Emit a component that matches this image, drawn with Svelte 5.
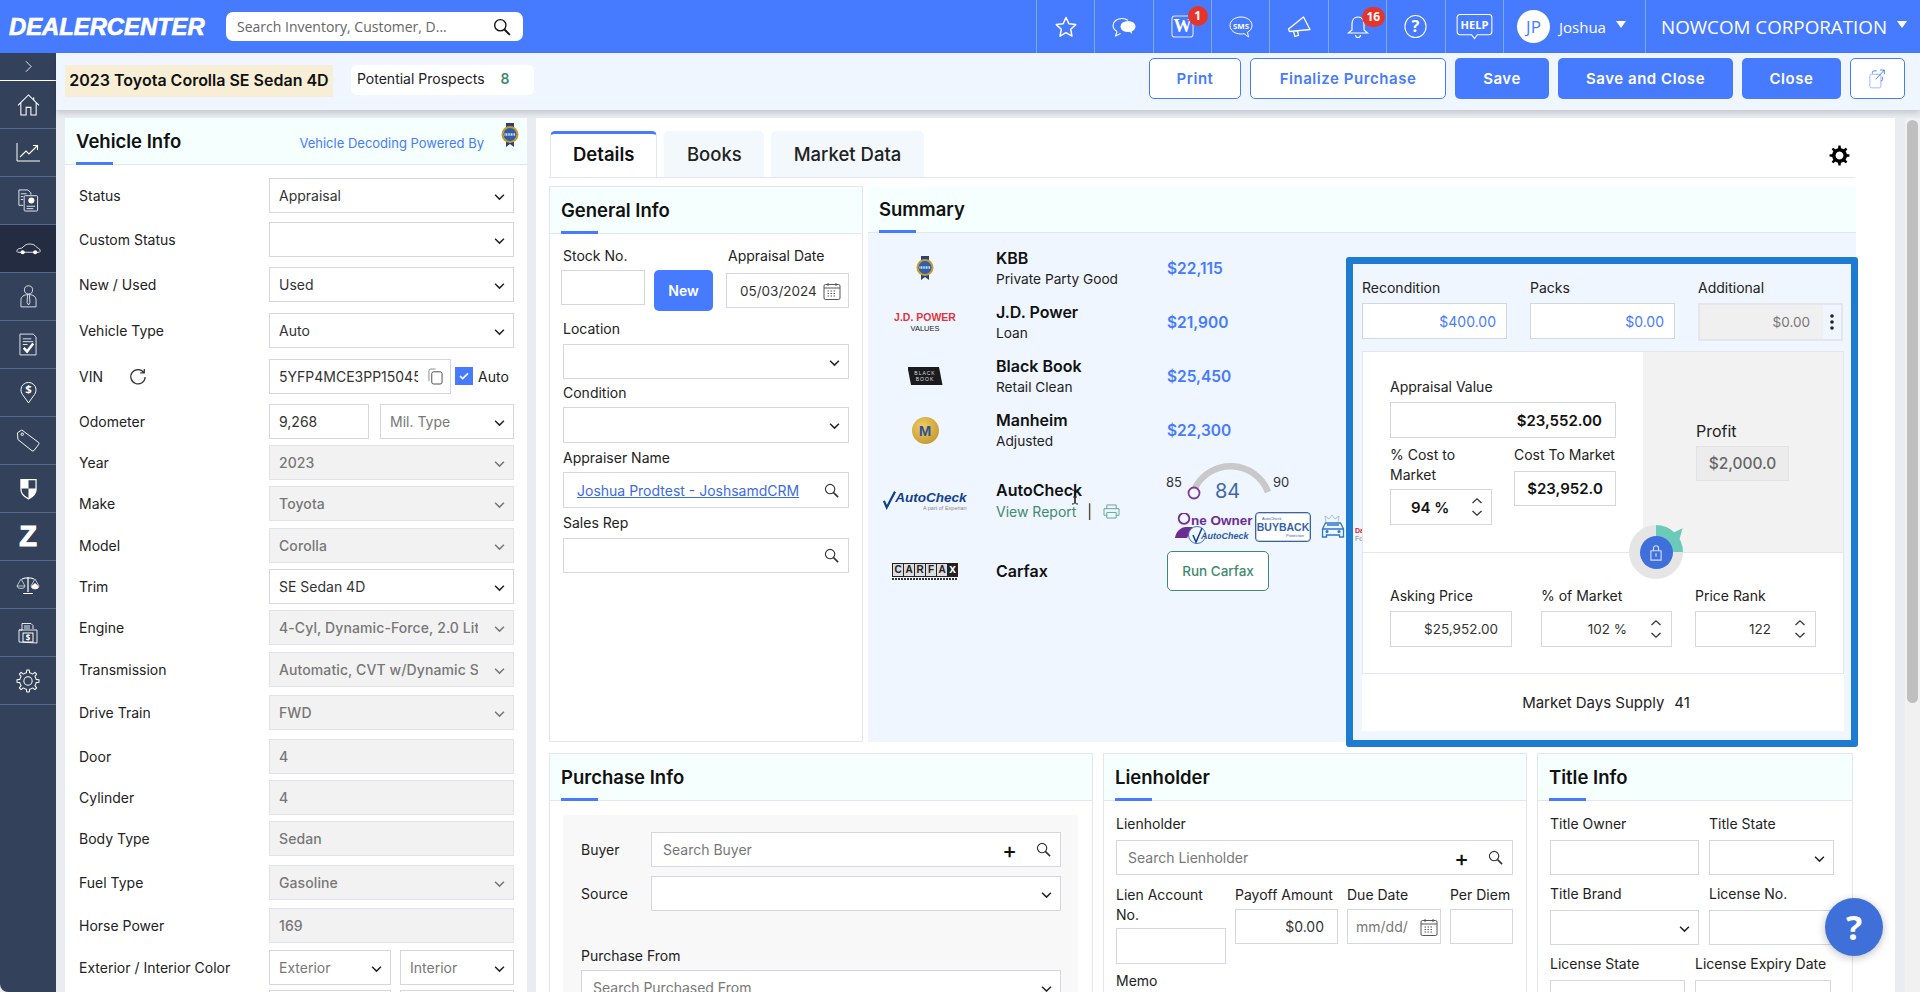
<script>
  // row pitch comes from the page itself, the rows are not evenly spaced
  const rows = [
    { label: 'Status', value: 'Appraisal', type: 'sel', pitch: 44 },
    { label: 'Custom Status', value: '', type: 'sel', pitch: 45 },
    { label: 'New / Used', value: 'Used', type: 'sel', pitch: 46 },
    { label: 'Vehicle Type', value: 'Auto', type: 'sel', pitch: 46 },
    { label: 'VIN', type: 'vin', pitch: 45 },
    { label: 'Odometer', type: 'odo', pitch: 41 },
    { label: 'Year', value: '2023', type: 'dsel', pitch: 41 },
    { label: 'Make', value: 'Toyota', type: 'dsel', pitch: 42 },
    { label: 'Model', value: 'Corolla', type: 'dsel', pitch: 41 },
    { label: 'Trim', value: 'SE Sedan 4D', type: 'sel', pitch: 41 },
    { label: 'Engine', value: '4-Cyl, Dynamic-Force, 2.0 Liter', type: 'dsel', pitch: 42 },
    { label: 'Transmission', value: 'Automatic, CVT w/Dynamic Shift', type: 'dsel', pitch: 43 },
    { label: 'Drive Train', value: 'FWD', type: 'dsel', pitch: 44 },
    { label: 'Door', value: '4', type: 'dis', pitch: 41 },
    { label: 'Cylinder', value: '4', type: 'dis', pitch: 41 },
    { label: 'Body Type', value: 'Sedan', type: 'dis', pitch: 44 },
    { label: 'Fuel Type', value: 'Gasoline', type: 'dsel', pitch: 43 },
    { label: 'Horse Power', value: '169', type: 'dis', pitch: 42 },
    { label: 'Exterior / Interior Color', type: 'color', pitch: 40 },
    { label: '', type: 'color2', pitch: 40 }
  ];

  const providers = [
    { name: 'KBB', sub: 'Private Party Good', price: '$22,115' },
    { name: 'J.D. Power', sub: 'Loan', price: '$21,900' },
    { name: 'Black Book', sub: 'Retail Clean', price: '$25,450' },
    { name: 'Manheim', sub: 'Adjusted', price: '$22,300' }
  ];

  function gearPath(cx, cy, r1, r2, teeth) {
    let d = '';
    const step = (Math.PI * 2) / teeth;
    for (let i = 0; i < teeth; i++) {
      const a = i * step;
      const pts = [
        [r1, a - step * 0.5],
        [r1, a - step * 0.25],
        [r2, a - step * 0.14],
        [r2, a + step * 0.14],
        [r1, a + step * 0.25]
      ];
      for (const [r, t] of pts) {
        d += (d ? 'L' : 'M') + (cx + r * Math.cos(t)).toFixed(2) + ' ' + (cy + r * Math.sin(t)).toFixed(2);
      }
    }
    return d + 'Z';
  }
</script>

{#snippet chev(muted)}
  <svg class="chev" class:muted viewBox="0 0 12 8" width="11" height="8"><path d="M1.2 1.5 6 6.3l4.8-4.8" fill="none" stroke="currentColor" stroke-width="1.6" /></svg>
{/snippet}

{#snippet search(size = 15)}
  <svg class="sicon" viewBox="0 0 16 16" width={size} height={size}><circle cx="6.5" cy="6.5" r="5" fill="none" stroke="currentColor" stroke-width="1.2" /><path d="M10.2 10.2 15 15" stroke="currentColor" stroke-width="1.7" /></svg>
{/snippet}

{#snippet calendar()}
  <svg class="cal" viewBox="0 0 18 18" width="18" height="18"><rect x="1" y="2.5" width="16" height="15" rx="1.5" fill="none" stroke="#555" /><path d="M1 6h16M5 1v3M13 1v3" stroke="#555" /><path d="M4.5 9h9M4.5 11.5h9M4.5 14h9" stroke="#555" stroke-dasharray="1.5 1.5" /></svg>
{/snippet}

{#snippet spin()}
  <svg class="spin" viewBox="0 0 12 20" width="12" height="20"><path d="M1.5 6 6 1.8 10.500 6M1.500 14 6 18.200 10.500 14" fill="none" stroke="#333" stroke-width="1.300" /></svg>
{/snippet}

{#snippet kbb(w, h)}
  <svg viewBox="0 0 18 24" width={w} height={h}><path d="M5 0h8v24l-4-3-4 3z" fill="#2b3f78" /><circle cx="9" cy="11.500" r="8.500" fill="#c99a2e" /><circle cx="9" cy="11.500" r="6.500" fill="#2f5fa8" /><path d="M3.500 11.500h11" stroke="#dfe8f4" stroke-width="2.500" stroke-dasharray="1 .6" /></svg>
{/snippet}

<div class="app">
  <header class="topbar">
    <div class="logo">DEALERCENTER</div>
    <div class="gsearch"><span>Search Inventory, Customer, D...</span>{@render search(18)}</div>
    <nav class="tools">
      <div class="tool"><svg viewBox="0 0 24 24" width="24" height="24"><path d="m12 2.500 2.900 6.300 6.800.8-5 4.700 1.300 6.800-6-3.400-6 3.400 1.300-6.800-5-4.700 6.800-.8z" fill="none" stroke="#fff" stroke-width="1.500" stroke-linejoin="round" /></svg></div>
      <div class="tool"><svg viewBox="0 0 24 20" width="24" height="20"><path d="M5 14.500C2.500 13 1 11 1 8.500 1 4.500 5 1.500 10 1.500c2.500 0 4.500.6 6 1.700M5 14.500 3.500 19l5-2.500" fill="none" stroke="#fff" stroke-width="1.100" stroke-linejoin="round" /><ellipse cx="16" cy="9.500" rx="7.500" ry="5.500" fill="#fff" /><path d="m17 14 3 3-.5-4z" fill="#fff" /></svg></div>
      <div class="tool"><svg viewBox="0 0 24 24" width="23" height="23"><rect x="1" y="1" width="22" height="22" rx="3" fill="none" stroke="#dfe9ff" stroke-width="1.100" /><text x="12" y="18" text-anchor="middle" class="wtxt">W</text></svg><b class="badge b1">1</b></div>
      <div class="tool"><svg viewBox="0 0 24 22" width="24" height="22"><path d="M12 1C6 1 1 4.500 1 9.500S6 18 12 18c1 0 2-.1 3-.4l4.500 3.400-1-4.800c3-1.500 4.500-4 4.500-6.700C23 4.500 18 1 12 1z" fill="none" stroke="#fff" stroke-width="1" /><text x="12" y="12.500" text-anchor="middle" class="smstxt">SMS</text></svg></div>
      <div class="tool"><svg viewBox="0 0 24 22" width="24" height="22"><path d="M16.500 1 1.500 13l1 2.500L23 13.500zM6.500 15.500l1.500 5 3.500-1.200-1-4.300" fill="none" stroke="#fff" stroke-width="1.300" stroke-linejoin="round" /></svg></div>
      <div class="tool"><svg viewBox="0 0 24 26" width="24" height="26"><path d="M12 3c-4 0-6 3-6 7v6l-3.500 3h19L18 16v-6c0-4-2-7-6-7zM9.500 21a2.500 2.500 0 0 0 5 0" fill="none" stroke="#fff" stroke-width="1.200" /></svg><b class="badge b2">16</b></div>
      <div class="tool"><svg viewBox="0 0 26 26" width="25" height="25"><ellipse cx="13" cy="13" rx="11" ry="11.500" fill="none" stroke="#fff" stroke-width="1.100" /><text x="13" y="19" text-anchor="middle" class="qtxt">?</text></svg></div>
      <div class="tool"><svg viewBox="0 0 38 28" width="37" height="27"><path d="M4 1.500h30a3 3 0 0 1 3 3v15a3 3 0 0 1-3 3H22l-3 4-3-4H4a3 3 0 0 1-3-3v-15a3 3 0 0 1 3-3z" fill="none" stroke="#fff" stroke-width="1.100" /><text x="19" y="16.500" text-anchor="middle" class="helptxt">HELP</text></svg></div>
      <div class="tool user"><span class="avatar">JP</span><span class="uname">Joshua</span><i class="caret"></i></div>
      <div class="tool org"><span>NOWCOM CORPORATION</span><i class="caret"></i></div>
    </nav>
  </header>

  <div class="body">
    <aside class="side">
      <div class="side-toggle"><svg viewBox="0 0 8 14" width="7" height="13"><path d="m1 1 6 6-6 6" fill="none" stroke="#fff" /></svg></div>
      <div class="side-item"><svg viewBox="0 0 24 23" width="23" height="22"><path d="M1 12 12 1l11 11M4 9.500V22h5.500v-8h5v8H20V9.500M17.500 3.500V6" fill="none" stroke="#fff" stroke-width="1.100" /></svg></div>
      <div class="side-item"><svg viewBox="0 0 24 19" width="24" height="19"><path d="M1 0v18h23" fill="none" stroke="#fff" stroke-width="1" /><path d="m4 14 6-6 3 3 8-8m-4-.5h4.500V7" fill="none" stroke="#fff" stroke-width="1.100" /></svg></div>
      <div class="side-item"><svg viewBox="0 0 22 24" width="22" height="23"><path d="M6 17H1.500V1h9.500l3 3v2" fill="none" stroke="#e6eaf0" /><rect x="7" y="7" width="14" height="16" rx="1" fill="none" stroke="#e6eaf0" /><circle cx="14.500" cy="12" r="3.200" fill="#fff" /><path d="M9.500 18h9M9.500 20.500h7M3.500 5h6M3.500 8h2.500M3.500 11h2.500" stroke="#e6eaf0" /></svg></div>
      <div class="side-item active"><svg viewBox="0 0 30 15" width="25" height="13"><path d="M1 11c0-3 2.500-3.500 6-4l4-3.500c3-2 9-2 12 .5l3 3c2 .5 3 1.500 3 4l-1 1H2z" fill="none" stroke="#fff" stroke-width="1" /><circle cx="8" cy="12" r="2.500" fill="#fff" /><circle cx="23" cy="12" r="2.500" fill="#fff" /></svg></div>
      <div class="side-item"><svg viewBox="0 0 18 24" width="17" height="23"><circle cx="9" cy="5" r="4.300" fill="none" stroke="#dde2ea" stroke-width="1" /><path d="M1 23v-7c0-4 3-6 8-6s8 2 8 6v7zM8 10.500l-.500 8L9 21l1.500-2.500-.5-8" fill="none" stroke="#dde2ea" stroke-width="1" /></svg></div>
      <div class="side-item"><svg viewBox="0 0 19 24" width="18" height="23"><path d="M1 1h14l3 3v19H1zM4 6h9M4 9h11M4 12h5" fill="none" stroke="#e6eaf0" stroke-width="1" /><path d="m5 15.500 3.500 4L15 11" fill="none" stroke="#fff" stroke-width="2.600" /></svg></div>
      <div class="side-item"><svg viewBox="0 0 18 24" width="17" height="23"><path d="M9 23 2.500 14a8 8 0 1 1 13 0z" fill="none" stroke="#fff" stroke-width="1" /><text x="9" y="12.500" text-anchor="middle" class="dollar">$</text></svg></div>
      <div class="side-item"><svg viewBox="0 0 25 24" width="24" height="23"><path d="M1.500 4 6 1 23.500 14a1.500 1.500 0 0 1 .2 2l-5 6.500a1.500 1.500 0 0 1-2 .2L2 11z" fill="none" stroke="#fff" stroke-width="1" /><circle cx="6.500" cy="5.500" r="1.300" fill="none" stroke="#fff" /></svg></div>
      <div class="side-item"><svg viewBox="0 0 18 23" width="17" height="22"><path d="M1 1.500h16v10.500c0 4.500-4 8-8 10-4-2-8-5.500-8-10z" fill="none" stroke="#fff" stroke-width="1.300" /><path d="M1 1.500h8v9.500H1zM9 11h8v1c0 4.500-4 8-8 10z" fill="#fff" /></svg></div>
      <div class="side-item"><span class="zed">Z</span></div>
      <div class="side-item"><svg viewBox="0 0 24 20" width="24" height="20"><path d="M12 2v15M7 18.500h10M6 4l3-1h6l3 1" fill="none" stroke="#fff" stroke-width="1.200" /><path d="M5 4 1 11h8zM1 11a4 2.500 0 0 0 8 0" fill="none" stroke="#dde2ea" stroke-width=".8" /><path d="M19 4l-4 7a4 3 0 0 0 8 0z" fill="none" stroke="#dde2ea" stroke-width=".8" /><path d="M15.500 11 19 8l3.500 3a3.500 3 0 0 1-7 0z" fill="#fff" /></svg></div>
      <div class="side-item"><svg viewBox="0 0 20 22" width="20" height="22"><path d="M4 8V1.500h9l2 2V7" fill="none" stroke="#e6eaf0" /><path d="M1 8v12l18 1V8zM1 8l3 0" fill="none" stroke="#e6eaf0" /><path d="M6 4h6M6 6h6" stroke="#e6eaf0" /><rect x="5" y="11" width="10" height="9" fill="none" stroke="#fff" /><text x="10" y="18.500" text-anchor="middle" class="dollar2">$</text></svg></div>
      <div class="side-item"><svg viewBox="0 0 26 26" width="24" height="24"><path d={gearPath(13, 13, 9, 12, 8)} fill="none" stroke="#fff" stroke-width="1.100" stroke-linejoin="round" /><circle cx="13" cy="13" r="4.500" fill="none" stroke="#fff" stroke-width="1.100" /></svg></div>
    </aside>

    <main class="main">
      <div class="subbar">
        <div class="vehicle-name">2023 Toyota Corolla SE Sedan 4D</div>
        <div class="prospects">Potential Prospects <b>8</b></div>
        <div class="actions">
          <button class="btn line w-print">Print</button>
          <button class="btn line w-final">Finalize Purchase</button>
          <button class="btn fill w-save">Save</button>
          <button class="btn fill w-saveclose">Save and Close</button>
          <button class="btn fill w-close">Close</button>
          <button class="btn line w-ext" aria-label="Open"><svg viewBox="0 0 20 24" width="17" height="21"><rect x="1" y="7" width="13" height="16" rx="2" fill="none" stroke="#8fadff" /><path d="M4 6V5a2 2 0 0 1 2-2h3M16 10v3a2 2 0 0 1-2 2M8 13 18 2m-5 0h5v5" fill="none" stroke="#477bff" stroke-width="1.100" /></svg></button>
        </div>
      </div>

      <div class="content">
        <section class="vehicle">
          <div class="panel-head tall">
            <h3>Vehicle Info</h3>
            <span class="decoding">Vehicle Decoding Powered By</span>
            <span class="head-kbb">{@render kbb(18, 24)}</span>
          </div>
          <div class="vehicle-rows">
            {#each rows as row}
              <div class="vrow" style="height:{row.pitch}px">
                <div class="vlabel">
                  {row.label}
                  {#if row.type === 'vin'}
                    <svg class="refresh" viewBox="0 0 20 20" width="18" height="18"><path d="M16.500 5A8 8 0 1 0 18 10M17 1v4.500h-4.500" fill="none" stroke="#333" stroke-width="1.400" /></svg>
                  {/if}
                </div>
                {#if row.type === 'sel'}
                  <div class="box grow"><span class="clip">{row.value}</span>{@render chev(false)}</div>
                {:else if row.type === 'dsel'}
                  <div class="box grow dis"><span class="clip">{row.value}</span>{@render chev(true)}</div>
                {:else if row.type === 'dis'}
                  <div class="box grow dis"><span class="clip">{row.value}</span></div>
                {:else if row.type === 'vin'}
                  <div class="box vin"><span class="clip">5YFP4MCE3PP150458</span><svg class="copy" viewBox="0 0 16 18" width="15" height="17"><rect x="4" y="4" width="11" height="13" rx="2" fill="none" stroke="#444" /><path d="M1 14V3a2 2 0 0 1 2-2h5" fill="none" stroke="#888" /></svg></div>
                  <span class="check"><svg viewBox="0 0 18 18" width="12" height="12"><path d="m3 9 4 4 8-8" fill="none" stroke="#fff" stroke-width="2.400" /></svg></span>
                  <span class="auto">Auto</span>
                {:else if row.type === 'odo'}
                  <div class="box odo">9,268</div>
                  <div class="box miltype"><span class="ph">Mil. Type</span>{@render chev(false)}</div>
                {:else if row.type === 'color'}
                  <div class="box ext"><span class="ph">Exterior</span>{@render chev(false)}</div>
                  <div class="box int"><span class="ph">Interior</span>{@render chev(false)}</div>
                {:else}
                  <div class="box ext"></div>
                  <div class="box int"></div>
                {/if}
              </div>
            {/each}
          </div>
        </section>

        <section class="work">
          <div class="tabs">
            <div class="tab on">Details</div>
            <div class="tab">Books</div>
            <div class="tab">Market Data</div>
            <svg class="gear" viewBox="0 0 24 24" width="21" height="21"><path fill-rule="evenodd" d={gearPath(12, 12, 8.500, 11.500, 8) + 'M12 7.500a4.500 4.500 0 1 0 .01 0z'} fill="#000" /></svg>
          </div>

          <div class="top-row">
            <section class="panel general">
              <div class="panel-head"><h3>General Info</h3></div>
              <div class="general-body">
                <div class="stock-row">
                  <div class="stock">
                    <label for="stockno">Stock No.</label>
                    <div id="stockno" class="box"></div>
                  </div>
                  <button class="new-btn">New</button>
                  <div class="appraisal-date">
                    <span class="lbl">Appraisal Date</span>
                    <div class="box"><span>05/03/2024</span>{@render calendar()}</div>
                  </div>
                </div>
                <span class="lbl loc">Location</span>
                <div class="box gen">{@render chev(false)}</div>
                <span class="lbl">Condition</span>
                <div class="box gen tall">{@render chev(false)}</div>
                <span class="lbl">Appraiser Name</span>
                <div class="box gen tall"><a href="#appraiser" class="link">Joshua Prodtest - JoshsamdCRM</a>{@render search(15)}</div>
                <span class="lbl">Sales Rep</span>
                <div class="box gen">{@render search(15)}</div>
              </div>
            </section>

            <section class="panel summary">
              <div class="panel-head"><h3>Summary</h3></div>
              <div class="summary-body">
                <div class="providers">
                  {#each providers as p, i}
                    <div class="prow">
                      <div class="plogo">
                        {#if i === 0}
                          {@render kbb(18, 24)}
                        {:else if i === 1}
                          <div class="jd"><b>J.D. POWER</b><span>VALUES</span></div>
                        {:else if i === 2}
                          <div class="bb"><span>BLACK<br />BOOK</span></div>
                        {:else}
                          <div class="manheim"><span>M</span></div>
                        {/if}
                      </div>
                      <div class="pname"><strong>{p.name}</strong><span>{p.sub}</span></div>
                      <div class="pprice">{p.price}</div>
                    </div>
                  {/each}
                  <div class="prow autocheck">
                    <div class="plogo"><div class="ac-logo"><svg viewBox="0 0 14 20" width="13" height="20"><path d="M1 11l3 7L13 1" fill="none" stroke="#123f8c" stroke-width="2.400" /></svg><div><b>AutoCheck</b><span>A part of Experian</span></div></div></div>
                    <div class="pname">
                      <strong>AutoCheck</strong>
                      <span class="report">View Report <i>|</i><svg viewBox="0 0 18 16" width="17" height="15"><path d="M4 5V1h10v4M4 12H1V5h16v7h-3M4 9h10v6H4z" fill="none" stroke="#5fa58e" /></svg></span>
                      <svg class="ibeam" viewBox="0 0 8 16" width="8" height="16"><path d="M1 1c2 0 3 .5 3 2v10c0 1.500-1 2-3 2M7 1c-2 0-3 .5-3 2v10c0 1.500 1 2 3 2M2 8h4" fill="none" stroke="#111" stroke-width="1" /></svg>
                    </div>
                    <div class="badges">
                      <div class="gauge">
                        <span class="g85">85</span>
                        <svg viewBox="0 0 95 36" width="95" height="36"><path d="M12 26A40 40 0 0 1 85 30" fill="none" stroke="#c9c9c9" stroke-width="6.500" /><circle cx="11" cy="31" r="5.500" fill="#f0f7ff" stroke="#7c3a94" stroke-width="1.800" /></svg>
                        <span class="g84">84</span>
                        <span class="g90">90</span>
                      </div>
                      <div class="badge-row">
                        <div class="oneowner">
                          <svg viewBox="0 0 40 32" width="40" height="32"><circle cx="9" cy="5.500" r="5.300" fill="none" stroke="#6d2e92" stroke-width="1.800" /><path d="M0 25c1-7 6-11 11-11h7l-6 11z" fill="#6d2e92" /><circle cx="22" cy="22" r="8.500" fill="#f0f7ff" stroke="#3e78c4" stroke-width="1" /><path d="m18 22 3 7 6-14" fill="none" stroke="#123f8c" stroke-width="1.500" /></svg>
                          <b>ne Owner</b><span>AutoCheck</span>
                        </div>
                        <div class="buyback"><small>AutoCheck</small><b>BUYBACK</b><small class="pr">Protection</small></div>
                        <svg class="crash" viewBox="0 0 24 26" width="24" height="26"><path d="M5 8 4 2l4 3 3-4 3 4 4-3-1 6" fill="none" stroke="#8fb6e0" stroke-width=".8" /><path d="M1.500 23v-8l3-6h15l3 6v8h-4v-2H5.500v2zM1.500 15h21M6 11h12" fill="none" stroke="#2f77c8" stroke-width="1.300" /><circle cx="6" cy="17.500" r="1.500" fill="#2f77c8" /><circle cx="18" cy="17.500" r="1.500" fill="#2f77c8" /></svg>
                      </div>
                    </div>
                  </div>
                  <div class="prow carfax">
                    <div class="plogo"><div class="cf-wrap"><div class="cf"><span>C</span><span>A</span><span>R</span><span>F</span><span>A</span><em>x</em></div><i class="cf-sub"></i></div></div>
                    <div class="pname"><strong>Carfax</strong></div>
                    <button class="run">Run Carfax</button>
                  </div>
                </div>

                <div class="calc">
                  <div class="cut"><b>Da</b><span>Fo</span></div>
                  <div class="fees">
                    <div class="fee"><span class="lbl">Recondition</span><div class="box blue">$400.00</div></div>
                    <div class="fee"><span class="lbl">Packs</span><div class="box blue">$0.00</div></div>
                    <div class="fee"><span class="lbl">Additional</span><div class="box extra"><span>$0.00</span><i class="kebab"><svg viewBox="0 0 4 16" width="4" height="16"><circle cx="2" cy="2" r="1.800" fill="#222" /><circle cx="2" cy="8" r="1.800" fill="#222" /><circle cx="2" cy="14" r="1.800" fill="#222" /></svg></i></div></div>
                  </div>
                  <div class="calc-card">
                    <div class="calc-top">
                      <div class="calc-left">
                        <span class="lbl">Appraisal Value</span>
                        <div class="box strong right wide">$23,552.00</div>
                        <div class="cost-row">
                          <div class="pct">
                            <span class="lbl two">% Cost to Market</span>
                            <div class="box strong"><span class="c94">94 %</span>{@render spin()}</div>
                          </div>
                          <div class="ctm">
                            <span class="lbl">Cost To Market</span>
                            <div class="box strong right">$23,952.0</div>
                          </div>
                        </div>
                      </div>
                      <div class="calc-right">
                        <span class="profit-lbl">Profit</span>
                        <div class="box profit">$2,000.0</div>
                      </div>
                      <div class="lock">
                        <span class="lock-in"><svg viewBox="0 0 16 20" width="14" height="17"><path d="M5 8V5a3 3 0 0 1 6 0v3M2 8h12v11H2zM8 11v4" fill="none" stroke="#d5e0f8" stroke-width="1.300" /></svg></span>
                      </div>
                    </div>
                    <div class="calc-bottom">
                      <div class="ask"><span class="lbl">Asking Price</span><div class="box right">$25,952.00</div></div>
                      <div class="ofm"><span class="lbl">% of Market</span><div class="box"><span class="rt">102 %</span>{@render spin()}</div></div>
                      <div class="rank"><span class="lbl">Price Rank</span><div class="box"><span class="rt">122</span>{@render spin()}</div></div>
                    </div>
                    <div class="supply">Market Days Supply <span>41</span></div>
                  </div>
                </div>
              </div>
            </section>
          </div>

          <div class="bottom-row">
            <section class="panel purchase">
              <div class="panel-head"><h3>Purchase Info</h3></div>
              <div class="purchase-inner">
                <div class="inline"><span class="lbl">Buyer</span><div class="box"><span class="ph">Search Buyer</span><span class="plus">+</span>{@render search(15)}</div></div>
                <div class="inline"><span class="lbl">Source</span><div class="box">{@render chev(false)}</div></div>
                <span class="lbl from">Purchase From</span>
                <div class="box"><span class="ph">Search Purchased From</span>{@render chev(false)}</div>
              </div>
            </section>

            <section class="panel lien">
              <div class="panel-head"><h3>Lienholder</h3></div>
              <div class="lien-body">
                <span class="lbl">Lienholder</span>
                <div class="box"><span class="ph">Search Lienholder</span><span class="plus">+</span>{@render search(15)}</div>
                <div class="lien-grid">
                  <div class="lacct"><span class="lbl">Lien Account No.</span><div class="box"></div></div>
                  <div class="payoff"><span class="lbl">Payoff Amount</span><div class="box right">$0.00</div></div>
                  <div class="due"><span class="lbl">Due Date</span><div class="box"><span class="ph clip">mm/dd/</span>{@render calendar()}</div></div>
                  <div class="diem"><span class="lbl">Per Diem</span><div class="box"></div></div>
                </div>
                <span class="lbl">Memo</span>
              </div>
            </section>

            <section class="panel title-info">
              <div class="panel-head"><h3>Title Info</h3></div>
              <div class="title-body">
                <div class="tcol a"><span class="lbl">Title Owner</span><div class="box"></div></div>
                <div class="tcol b"><span class="lbl">Title State</span><div class="box">{@render chev(false)}</div></div>
                <div class="tcol a"><span class="lbl">Title Brand</span><div class="box">{@render chev(false)}</div></div>
                <div class="tcol b"><span class="lbl">License No.</span><div class="box"></div></div>
                <div class="tcol c"><span class="lbl">License State</span><div class="box">{@render chev(false)}</div></div>
                <div class="tcol d"><span class="lbl">License Expiry Date</span><div class="box"></div></div>
              </div>
            </section>
          </div>
        </section>

        <div class="scrollbar"><div class="thumb"></div></div>
      </div>
    </main>
  </div>

  <button class="help-float">?</button>
</div>

<style>
  :global(body) {
    margin: 0;
    font-family: Inter, "Noto Sans", sans-serif;
    color: #222;
  }

  .app {
    width: 1920px;
    height: 992px;
    overflow: hidden;
    display: flex;
    flex-direction: column;
    position: relative;
    font-size: 14px;
    background: #e9ecf1;
  }

  /* top bar */
  .topbar {
    height: 53px;
    flex: none;
    display: flex;
    align-items: center;
    background: #477bff;
    color: #fff;
  }
  .logo {
    margin-left: 9px;
    width: 199px;
    font: italic 700 23.800px/1 "Liberation Sans", sans-serif;
    white-space: nowrap;
    -webkit-text-stroke: .7px #fff;
  }
  .gsearch {
    margin-left: 18px;
    width: 297px;
    height: 29px;
    padding: 0 12px 0 11px;
    box-sizing: border-box;
    display: flex;
    align-items: center;
    justify-content: space-between;
    background: #fff;
    border-radius: 7px;
    color: #666;
    font: 14px "Open Sans", sans-serif;
  }
  .gsearch :global(.sicon) { color: #111; }
  .tools {
    margin-left: auto;
    height: 53px;
    display: flex;
  }
  .tool {
    width: 58.400px;
    height: 53px;
    box-sizing: border-box;
    border-left: 1px solid #79add6;
    display: flex;
    align-items: center;
    justify-content: center;
    position: relative;
  }
  .wtxt { font: 700 19px "Liberation Serif", serif; fill: #fff; }
  .smstxt { font: 700 7.800px "Open Sans", sans-serif; fill: #fff; }
  .qtxt { font: 700 17px "Open Sans", sans-serif; fill: #fff; }
  .helptxt { font: 700 11.500px "Open Sans", sans-serif; fill: #fff; }
  .badge {
    position: absolute;
    height: 20px;
    min-width: 20px;
    border-radius: 10px;
    background: #e5352b;
    color: #fff;
    font: 700 12px/20px "Open Sans", sans-serif;
    text-align: center;
    top: 6px;
  }
  .b1 { left: 34px; }
  .b2 { left: 33px; min-width: 23px; top: 7px; }
  .user {
    width: 142px;
    justify-content: flex-start;
    padding-left: 13px;
  }
  .avatar {
    width: 33px;
    height: 33px;
    border-radius: 50%;
    background: #fff;
    color: #477bff;
    font: 17px/33px "Open Sans", sans-serif;
    text-align: center;
  }
  .uname {
    margin-left: 9px;
    font: 15px "Open Sans", sans-serif;
  }
  .caret {
    margin-left: 10px;
    margin-top: -4px;
    border-left: 5px solid transparent;
    border-right: 5px solid transparent;
    border-top: 7px solid #fff;
  }
  .org {
    width: 275px;
    justify-content: flex-start;
    padding-left: 15px;
    font: 18.800px "Open Sans", sans-serif;
    white-space: nowrap;
  }

  /* left rail */
  .body {
    flex: 1;
    min-height: 0;
    display: flex;
  }
  .side {
    width: 56px;
    flex: none;
    background: #33425a;
    border-bottom-left-radius: 8px;
  }
  .side-toggle {
    height: 27px;
    display: flex;
    align-items: center;
    justify-content: center;
    border-bottom: 1px solid #fff;
    box-sizing: content-box;
  }
  .side-item {
    height: 47px;
    display: flex;
    align-items: center;
    justify-content: center;
    border-bottom: 1px solid #55698a;
  }
  .side-item.active { background: #242c42; }
  .zed {
    font: 900 29px/1 "Liberation Sans", sans-serif;
    color: #fff;
    -webkit-text-stroke: 1px #fff;
  }
  .dollar { font: 700 12px "Open Sans", sans-serif; fill: #fff; }
  .dollar2 { font: 700 8px "Open Sans", sans-serif; fill: #fff; }

  /* action bar */
  .main {
    flex: 1;
    min-width: 0;
    display: flex;
    flex-direction: column;
  }
  .subbar {
    height: 57px;
    flex: none;
    display: flex;
    align-items: flex-start;
    padding: 12px 15px 0 9px;
    box-sizing: border-box;
    background: #eff6ff;
    box-shadow: 0 3px 6px rgba(0, 0, 0, .16);
    position: relative;
    z-index: 2;
  }
  .vehicle-name {
    height: 32px;
    width: 268px;
    background: #f8eed6;
    font: 600 16px/31px Inter, sans-serif;
    color: #111;
    text-align: center;
    white-space: nowrap;
  }
  .prospects {
    margin-left: 18px;
    width: 183px;
    height: 30px;
    padding-left: 6px;
    box-sizing: border-box;
    background: #fff;
    border-radius: 6px;
    font: 14px/27px Inter, sans-serif;
  }
  .prospects b { margin-left: 12px; font-weight: 600; color: #3f8a6d; }
  .actions {
    margin-left: auto;
    margin-top: -7px;
    display: flex;
    gap: 9px;
  }
  .btn {
    height: 41px;
    border-radius: 5px;
    font: 600 15px Inter, sans-serif;
    letter-spacing: .55px;
    padding: 0;
    display: flex;
    align-items: center;
    justify-content: center;
  }
  .btn.line { background: #fff; color: #477bff; border: 1px solid #477bff; }
  .btn.fill { background: #477bff; color: #fff; border: 0; }
  .w-print { width: 92px; }
  .w-final { width: 196px; }
  .w-save { width: 94px; }
  .w-saveclose { width: 175px; }
  .w-close { width: 99px; }
  .w-ext { width: 55px; }

  /* content */
  .content {
    flex: 1;
    min-height: 0;
    display: flex;
    padding: 8px 0 0 9px;
  }
  .vehicle {
    width: 462px;
    flex: none;
    background: #fff;
  }
  .panel-head {
    height: 47px;
    box-sizing: border-box;
    background: #f5fffe;
    border-bottom: 1px solid #e3e6ea;
    position: relative;
    display: flex;
    align-items: center;
    padding: 0 0 0 11px;
  }
  .panel-head::after {
    content: "";
    position: absolute;
    left: 11px;
    bottom: -1px;
    width: 37px;
    height: 3px;
    background: #477bff;
  }
  .panel-head h3 {
    margin: 0;
    font: 600 18.500px Inter, sans-serif;
    color: #111;
  }
  .decoding {
    margin-left: auto;
    margin-right: 17px;
    margin-top: 3px;
    color: #477bff;
    font-size: 13px;
  }
  .head-kbb { margin-right: 8px; margin-top: -10px; }

  .vehicle-rows { padding: 13px 13px 0; }
  .vrow {
    display: flex;
    align-items: flex-start;
  }
  .vlabel {
    width: 191px;
    flex: none;
    line-height: 35px;
    display: flex;
    align-items: center;
    gap: 26px;
    white-space: nowrap;
    font-size: 14px;
    padding-left: 1px;
    box-sizing: border-box;
  }
  .refresh { flex: none; }

  .box {
    height: 35px;
    box-sizing: border-box;
    border: 1px solid #d5d7de;
    background: #fff;
    display: flex;
    align-items: center;
    padding: 0 9px;
    color: #333;
    font-size: 14px;
    white-space: nowrap;
    overflow: hidden;
  }
  .box.grow { flex: 1; }
  .box.dis {
    background: #f2f2f2;
    color: #777;
    border-color: #e1e2e5;
    font-weight: 500;
    letter-spacing: .1px;
  }
  .box.dis .clip { margin-right: 16px; }
  .clip {
    overflow: hidden;
    white-space: nowrap;
    flex: 1;
    min-width: 0;
  }
  .chev {
    margin-left: auto;
    flex: none;
    color: #222;
    margin-top: 2px;
    margin-right: -1px;
  }
  .chev.muted { color: #777; }
  .sicon { margin-left: auto; flex: none; color: #333; }
  .ph { color: #777; }
  .vin { width: 182px; padding-right: 7px; }
  .vin .clip { margin-right: 10px; }
  .copy { flex: none; }
  .check {
    width: 18px;
    height: 18px;
    margin: 8px 0 0 4px;
    background: #477bff;
    display: flex;
    align-items: center;
    justify-content: center;
    flex: none;
  }
  .auto { margin-left: 5px; line-height: 35px; }
  .odo { width: 100px; }
  .miltype { width: 134px; margin-left: 11px; }
  .ext { width: 122px; }
  .int { width: 114px; margin-left: 9px; }

  .work {
    width: 1359px;
    flex: none;
    margin-left: 9px;
    background: #fff;
    padding: 13px 0 0 13px;
    box-sizing: border-box;
  }
  .tabs {
    width: 1306px;
    height: 47px;
    box-sizing: border-box;
    border-bottom: 1px solid #e3e6ea;
    display: flex;
    gap: 7px;
    padding-left: 1px;
    position: relative;
  }
  .tab {
    height: 46px;
    padding: 0 22.500px;
    display: flex;
    align-items: center;
    background: #f3f8fc;
    border-radius: 5px 5px 0 0;
    font: 500 18.500px Inter, sans-serif;
    color: #222;
  }
  .tab.on {
    background: #fff;
    border: 1px solid #e3e6ea;
    border-top: 3px solid #477bff;
    border-bottom: 0;
    font-weight: 600;
    color: #111;
    padding: 0 22px 3px;
    box-sizing: border-box;
  }
  .gear { margin-left: auto; margin-right: 5px; margin-top: 14px; }

  .top-row {
    display: flex;
    gap: 5px;
    margin-top: 8px;
    height: 556px;
  }
  .panel {
    box-sizing: border-box;
    border: 1px solid #e3e6ea;
    background: #fff;
  }
  .general { width: 314px; }
  .general-body {
    padding: 13px 13px 0 13px;
    display: flex;
    flex-direction: column;
  }
  .lbl {
    display: block;
    font-size: 14px;
    line-height: 17px;
    color: #222;
    white-space: nowrap;
  }
  .stock-row { display: flex; margin-left: -2px; margin-bottom: 9px; }
  .stock { width: 93px; }
  .stock label { display: block; font-size: 14px; line-height: 17px; padding-left: 2px; margin-bottom: 6px; }
  .stock .box { width: 84px; }
  .new-btn {
    width: 59px;
    height: 41px;
    margin-top: 23px;
    border: 0;
    border-radius: 5px;
    background: #477bff;
    color: #fff;
    font: 600 14px Inter, sans-serif;
  }
  .appraisal-date { margin-left: 13px; }
  .appraisal-date .lbl { padding-left: 2px; margin-bottom: 9px; }
  .appraisal-date .box { width: 123px; padding-left: 13px; justify-content: space-between; padding-right: 7px; font-size: 13.500px; }
  .gen { margin: 7px 0 5px; }
  .gen.tall { height: 36px; margin: 6px 0 6px; }
  .link { color: #3c6be0; font-size: 14px; margin-left: 4px; }

  .summary { width: 988px; display: flex; flex-direction: column; border: 0; }
  .summary-body {
    flex: 1;
    min-height: 0;
    display: flex;
    background: #eff6ff;
  }
  .providers {
    width: 478px;
    height: 100%;
    flex: none;
    padding-top: 8px;
    box-sizing: border-box;
    overflow: hidden;
  }
  .prow {
    height: 54px;
    display: flex;
    align-items: center;
  }
  .plogo {
    width: 114px;
    flex: none;
    display: flex;
    justify-content: center;
    margin-right: 14px;
  }
  .pname {
    width: 171px;
    flex: none;
    display: flex;
    flex-direction: column;
    gap: 4px;
    position: relative;
  }
  .pname strong { font: 600 16px/18px Inter, sans-serif; color: #111; }
  .pname span { font-size: 13.700px; line-height: 17px; color: #222; }
  .pprice { font: 600 15.500px Inter, sans-serif; color: #477bff; }
  .ibeam { position: absolute; left: 75px; top: 8px; }

  .jd { display: flex; flex-direction: column; align-items: center; line-height: 1; }
  .jd b { font: 700 10.500px "Liberation Sans", sans-serif; color: #e0363c; }
  .jd span { font: 7.500px "Liberation Sans", sans-serif; color: #222; margin-top: 1px; }
  .bb {
    width: 35px;
    height: 18px;
    background: #1b1b1d;
    clip-path: polygon(0 0, 90% 0, 100% 100%, 10% 100%);
    display: flex;
    align-items: center;
    justify-content: center;
  }
  .bb span { font: 5px/6px "Liberation Sans", sans-serif; letter-spacing: 1px; color: #ddd; text-align: center; }
  .manheim {
    width: 27px;
    height: 27px;
    border-radius: 50%;
    background: radial-gradient(circle at 40% 35%, #f0cc63, #b98d22);
    display: flex;
    align-items: center;
    justify-content: center;
  }
  .manheim span { font: 700 15px "Liberation Sans", sans-serif; color: #2f4f9c; }

  .autocheck { height: 86px; align-items: center; }
  .ac-logo { display: flex; align-items: center; }
  .ac-logo div { display: flex; flex-direction: column; line-height: 1; align-items: flex-end; margin-left: -1px; }
  .ac-logo b { font: italic 700 13.500px "Liberation Sans", sans-serif; color: #123f8c; }
  .ac-logo span { font: 5.500px "Liberation Sans", sans-serif; color: #888; }
  .report { color: #3f8a6d !important; display: flex; align-items: center; gap: 11px; font-size: 14px !important; }
  .report i { font-style: normal; color: #222; }
  .badges { position: relative; width: 190px; height: 86px; }
  .gauge { position: absolute; left: 10px; top: 3px; width: 125px; height: 45px; }
  .gauge svg { position: absolute; left: 6px; top: 2px; overflow: visible; }
  .g85, .g90 { position: absolute; top: 14px; font-size: 13px; color: #333; }
  .g85 { left: -11px; }
  .g90 { left: 96px; }
  .g84 { position: absolute; left: 38px; top: 19px; font-size: 20px; color: #3f68a8; }
  .badge-row {
    position: absolute;
    left: 8px;
    top: 56px;
    display: flex;
    align-items: flex-start;
    width: 180px;
    gap: 8px;
  }
  .oneowner { width: 73px; height: 32px; position: relative; line-height: 1; white-space: nowrap; }
  .oneowner svg { position: absolute; left: 0; top: 0; }
  .oneowner b { position: absolute; left: 16px; top: 0; font: 700 13.500px "Liberation Sans", sans-serif; color: #6d2e92; }
  .oneowner span { position: absolute; left: 26px; top: 18px; font: italic 600 9px "Liberation Sans", sans-serif; color: #2e5aa0; }
  .buyback {
    width: 54px;
    height: 28px;
    box-sizing: border-box;
    border: 1px solid #c8ccd4;
    outline: 1px solid #3465a8;
    outline-offset: 0;
    background: #fff;
    border-radius: 3px;
    display: flex;
    flex-direction: column;
    align-items: center;
    line-height: 1;
    padding-top: 2px;
  }
  .buyback b { font: 700 10.500px "Liberation Sans", sans-serif; color: #3465a8; }
  .buyback small { font: 4px "Liberation Sans", sans-serif; color: #3465a8; align-self: flex-start; margin-left: 5px; }
  .buyback small.pr { align-self: flex-end; margin: 0 5px 0 0; }
  .crash { margin-left: 3px; margin-top: 1px; flex: none; }

  .carfax { height: 56px; }
  .cf-wrap { display: flex; flex-direction: column; align-items: stretch; gap: 1px; }
  .cf {
    display: flex;
    gap: 1px;
    padding: 1px;
    background: #222;
    height: 12px;
  }
  .cf span {
    width: 10px;
    background: #ddd;
    color: #222;
    font: 700 10px/12px "Liberation Sans", sans-serif;
    text-align: center;
  }
  .cf em { font: 700 12px/11px "Liberation Sans", sans-serif; color: #fff; font-style: normal; padding: 0 1px; }
  .cf-sub { height: 2px; background: repeating-linear-gradient(90deg, #333 0 2px, transparent 2px 3px); }
  .run {
    width: 102px;
    height: 40px;
    background: #fff;
    border: 1px solid #3f8a6d;
    border-radius: 5px;
    color: #3f8a6d;
    font: 500 13.500px Inter, sans-serif;
  }

  .calc {
    width: 512px;
    height: 490px;
    margin: 24px -2px 0 0;
    box-sizing: border-box;
    border: 7px solid #1d7bd1;
    border-radius: 3px;
    background: #eff6ff;
    padding: 15px 7px 0 9px;
    position: relative;
    flex: none;
  }
  .cut {
    position: absolute;
    left: 2px;
    top: 263px;
    width: 7px;
    overflow: hidden;
    font: 700 7px/8px "Liberation Sans", sans-serif;
  }
  .cut b { color: #d22; display: block; }
  .cut span { font-weight: 400; color: #888; }
  .fees { display: flex; gap: 23px; }
  .fee { width: 145px; }
  .fee .lbl { margin-bottom: 7px; }
  .fee .box { height: 36px; }
  .blue { color: #477bff; justify-content: flex-end; padding-right: 10px; }
  .extra {
    height: 38px !important;
    border: 2px solid #e4e6eb;
    background: #f0f0f0;
    color: #777;
    justify-content: flex-end;
    padding: 0;
  }
  .extra span { padding-right: 13px; font-size: 13.500px; }
  .kebab {
    width: 18px;
    align-self: stretch;
    background: #eff6ff;
    display: flex;
    align-items: center;
    justify-content: center;
  }
  .calc-card {
    margin-top: 10px;
    background: #fff;
    border: 1px solid #e3e6ea;
    border-bottom: 0;
    height: 380px;
    box-sizing: border-box;
  }
  .calc-top {
    height: 200px;
    display: flex;
    border-bottom: 1px solid #e3e6ea;
    position: relative;
  }
  .calc-left {
    width: 280px;
    padding: 26px 0 0 27px;
    box-sizing: border-box;
  }
  .calc-left > .lbl { margin-bottom: 7px; }
  .strong { font-weight: 600; font-size: 15px; color: #111; }
  .right { justify-content: flex-end; padding-right: 13px; }
  .wide { width: 226px; height: 36px; }
  .cost-row { display: flex; gap: 22px; margin-top: 7px; }
  .pct { width: 102px; }
  .pct .lbl { white-space: normal; line-height: 20px; height: 40px; margin-bottom: 4px; }
  .pct .box { height: 36px; padding-left: 20px; padding-right: 8px; }
  .spin { margin-left: auto; flex: none; }
  .ctm { width: 102px; }
  .ctm .lbl { line-height: 20px; margin-bottom: 6px; }
  .ctm .box { justify-content: center; padding: 0; }
  .calc-right {
    flex: 1;
    background: #f2f2f2;
    padding: 70px 0 0 53px;
    box-sizing: border-box;
  }
  .profit-lbl { display: block; font-size: 16px; line-height: 19px; margin-bottom: 5px; }
  .profit {
    width: 93px;
    background: #ececec;
    border-color: #e1e2e5;
    color: #666;
    font-weight: 500;
    font-size: 15.500px;
    justify-content: center;
    padding: 0;
  }
  .lock {
    position: absolute;
    left: 266px;
    top: 173px;
    width: 54px;
    height: 54px;
    border-radius: 50%;
    background: conic-gradient(#6ccabb 0 25%, #e5e5e5 25% 100%);
    display: flex;
    align-items: center;
    justify-content: center;
    z-index: 1;
  }
  .lock::after {
    content: "";
    position: absolute;
    left: 45px;
    top: 2px;
    width: 0;
    height: 0;
    border-left: 5px solid transparent;
    border-right: 5px solid transparent;
    border-bottom: 11px solid #6ccabb;
    transform: rotate(40deg);
  }
  .lock-in {
    width: 33px;
    height: 33px;
    border-radius: 50%;
    background: #3f6fdb;
    display: flex;
    align-items: center;
    justify-content: center;
  }
  .calc-bottom {
    height: 121px;
    display: flex;
    padding: 34px 0 0 27px;
    box-sizing: border-box;
    border-bottom: 1px solid #e3e6ea;
  }
  .calc-bottom .lbl { margin-bottom: 7px; }
  .calc-bottom .box { height: 36px; font-size: 13.500px; }
  .ask { width: 122px; margin-right: 29px; }
  .ofm { width: 131px; margin-right: 23px; }
  .rank { width: 121px; }
  .rt { flex: 1; text-align: right; margin-right: 23px; }
  .supply {
    height: 57px;
    display: flex;
    align-items: center;
    justify-content: center;
    font-size: 15px;
    margin: 0 -1px;
    padding-left: 6px;
    background: #fff;
    gap: 10px;
    color: #222;
  }

  .bottom-row {
    display: flex;
    gap: 10px;
    margin-top: 11px;
  }
  .purchase { width: 544px; height: 400px; }
  .purchase-inner {
    margin: 14px 14px 0 13px;
    padding: 17px 17px 0 18px;
    background: #f8f8f8;
    height: 240px;
  }
  .purchase-inner .box, .lien-body > .box { padding-left: 11px; }
  .inline { display: flex; align-items: center; margin-bottom: 9px; }
  .inline .lbl { width: 70px; flex: none; }
  .inline .box { flex: 1; }
  .plus { margin-left: auto; font-size: 22px; font-weight: 500; color: #111; line-height: 1; }
  .inline .plus + :global(.sicon), .lien-body .plus + :global(.sicon) { margin-left: 19px; }
  .from { margin-top: 36px; margin-bottom: 6px; }

  .lien { width: 424px; height: 400px; }
  .lien-body { padding: 14px 13px 0 12px; }
  .lien-body > .lbl:first-child { margin-bottom: 8px; }
  .lien-grid {
    display: grid;
    grid-template-columns: 110px 103px 94px 63px;
    column-gap: 9px;
    margin-top: 10px;
    margin-bottom: 8px;
  }
  .lacct .lbl { white-space: normal; line-height: 20px; margin-bottom: 3px; }
  .lacct .box { height: 36px; }
  .payoff .lbl, .due .lbl, .diem .lbl { line-height: 20px; margin-bottom: 4px; }
  .due .box { padding-right: 2px; padding-left: 8px; }

  .title-info { width: 316px; height: 400px; }
  .title-body {
    padding: 14px 0 0 12px;
    display: grid;
    grid-template-columns: 149px 125px;
    column-gap: 10px;
    row-gap: 10px;
    position: relative;
  }
  .tcol .lbl { margin-bottom: 8px; }
  .tcol.c { width: 135px; }
  .tcol.d { width: 136px; margin-left: -14px; }
  .tcol .box { width: 100%; }

  .scrollbar {
    width: 15px;
    margin-left: auto;
    background: #f1f1f1;
    flex: none;
    padding: 2px;
    box-sizing: border-box;
  }
  .thumb {
    width: 11px;
    height: 583px;
    background: #bfbfbf;
    border-radius: 6px;
  }

  .help-float {
    position: absolute;
    left: 1825px;
    top: 898px;
    width: 58px;
    height: 58px;
    border: 0;
    border-radius: 50%;
    background: #3f6fd8;
    color: #fff;
    font: 700 34px "Open Sans", sans-serif;
    box-shadow: 0 2px 8px rgba(0, 0, 0, .25);
    padding: 0;
  }
</style>
